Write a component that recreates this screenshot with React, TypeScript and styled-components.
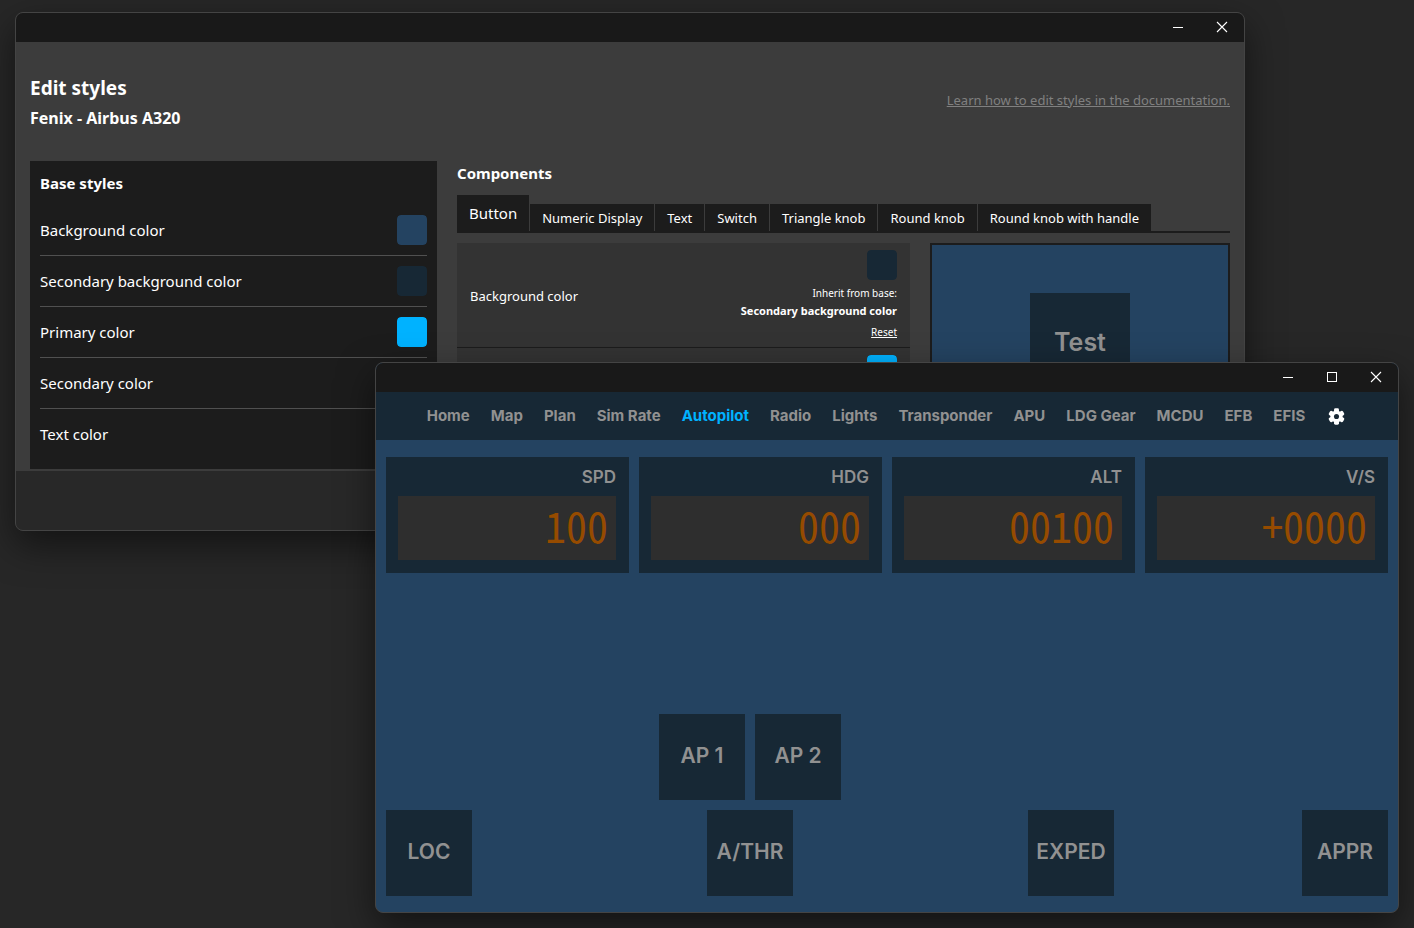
import React from "react";
import styled, { createGlobalStyle } from "styled-components";

const GlobalStyle = createGlobalStyle`
  *, *::before, *::after { box-sizing: border-box; }
  body {
    margin: 0;
    background: #272727;
    color: #fff;
    font-family: "Noto Sans", "Open Sans", sans-serif;
    font-size: 15px;
  }
  button, input { font: inherit; color: inherit; margin: 0; }
  button { cursor: pointer; }
  h1, h2, h3, ul { margin: 0; padding: 0; }
`;

const panelFont = `Inter, Roboto, sans-serif`;

const Desktop = styled.main`
  position: relative;
  min-height: 100vh;
  overflow: hidden;
`;

const Window = styled.section`
  position: absolute;
  border: 1px solid #444;
  border-radius: 8px;
  overflow: hidden;
  background: #3c3c3c;
  box-shadow: 0 14px 36px rgba(0, 0, 0, 0.5);
`;

const StylesWindow = styled(Window)`
  top: 12px;
  left: 15px;
  right: 169px;
`;

const PanelWindow = styled(Window)`
  top: 362px;
  left: 375px;
  right: 15px;
  background: #244361;
`;

const TitleBar = styled.div`
  display: flex;
  justify-content: flex-end;
  height: 29px;
  background: #191919;
`;

const WindowButton = styled.button`
  display: flex;
  align-items: center;
  justify-content: center;
  width: 44px;
  padding: 0 0 1px;
  border: 0;
  background: transparent;
`;

const EditorBody = styled.div`
  padding: 32px 14px 2px;
`;

const EditorHeader = styled.header`
  display: flex;
  justify-content: space-between;
  align-items: center;
  padding-bottom: 30px;
`;

const Title = styled.h1`
  font-size: 19px;
  line-height: 28px;
  font-weight: 700;
`;

const Subtitle = styled.h2`
  margin-top: 4px;
  font-size: 16px;
  line-height: 25px;
  font-weight: 700;
`;

const DocsLink = styled.a`
  padding-bottom: 6px;
  color: #808080;
  font-size: 13px;
  line-height: 20px;
`;

const Columns = styled.div`
  display: grid;
  grid-template-columns: 407px minmax(0, 1fr);
  gap: 20px;
`;

const BasePanel = styled.section`
  padding: 10px;
  background: #1c1c1c;
`;

const SectionTitle = styled.h3`
  font-size: 15px;
  line-height: 24px;
  font-weight: 700;
`;

const BaseList = styled.ul`
  margin-top: 10px;
  list-style: none;
`;

const BaseRow = styled.li`
  display: flex;
  align-items: center;
  justify-content: space-between;
  padding: 10px 0;
  & + & { border-top: 1px solid #505050; }
`;

const Swatch = styled.input.attrs({ type: "color" })`
  appearance: none;
  display: block;
  width: 30px;
  height: 30px;
  padding: 0;
  border: 0;
  border-radius: 4px;
  overflow: hidden;
  background: none;
  &::-webkit-color-swatch-wrapper { padding: 0; }
  &::-webkit-color-swatch { border: 0; border-radius: 4px; }
`;

const Tabs = styled.div`
  display: flex;
  align-items: flex-end;
  gap: 1px;
  margin-top: 10px;
  border-bottom: 2px solid #1c1c1c;
`;

const Tab = styled.button<{ $active?: boolean }>`
  height: ${(p) => (p.$active ? 36 : 27)}px;
  padding: 0 12px;
  border: 0;
  background: #1c1c1c;
  font-size: ${(p) => (p.$active ? 15 : 13)}px;
  white-space: nowrap;
`;

const ComponentArea = styled.div`
  display: grid;
  grid-template-columns: minmax(0, 1fr) 300px;
  gap: 20px;
  align-items: start;
  margin-top: 10px;
`;

const PropertyList = styled.div`
  background: #333;
`;

const PropertyRow = styled.div`
  display: flex;
  align-items: center;
  justify-content: space-between;
  padding: 7px 13px 6px;
  border-bottom: 1px solid #1c1c1c;
  font-size: 13px;
`;

const PropertyValue = styled.div`
  display: flex;
  flex-direction: column;
  align-items: flex-end;
  font-size: 10px;
  line-height: 17px;
  ${Swatch} { margin-bottom: 5px; }
`;

const InheritedName = styled.strong`
  font-size: 11px;
`;

const ResetButton = styled.button`
  margin-top: 5px;
  padding: 0;
  border: 0;
  background: none;
  text-decoration: underline;
`;

const Preview = styled.div`
  display: flex;
  align-items: center;
  justify-content: center;
  height: 200px;
  border: 2px solid #1c1c1c;
  background: #244361;
`;

const SquareButton = styled.button<{ $size: number; $fontSize: number }>`
  width: ${(p) => p.$size}px;
  height: ${(p) => p.$size}px;
  padding: 0 0 3px;
  border: 0;
  background: #172835;
  color: #919191;
  font-family: ${panelFont};
  font-size: ${(p) => p.$fontSize}px;
  font-weight: 600;
  white-space: nowrap;
`;

const EditorFooter = styled.footer`
  height: 59px;
  background: #282828;
`;

const Nav = styled.nav`
  display: flex;
  align-items: center;
  justify-content: center;
  gap: 21px;
  height: 48px;
  background: #172835;
  font-family: ${panelFont};
  font-size: 15px;
  font-weight: 700;
`;

const NavLink = styled.a<{ $active?: boolean }>`
  padding-bottom: 2px;
  color: ${(p) => (p.$active ? "#00b2ff" : "#919191")};
  text-decoration: none;
  white-space: nowrap;
`;

const SettingsButton = styled.button`
  display: flex;
  padding: 0 2px;
  border: 0;
  background: none;
`;

const Panel = styled.div`
  display: flex;
  flex-direction: column;
  gap: 10px;
  min-height: 472px;
  padding: 17px 10px 16px;
`;

const Displays = styled.div`
  display: grid;
  grid-template-columns: repeat(4, minmax(0, 1fr));
  gap: 10px;
  margin-bottom: auto;
`;

const DisplayCard = styled.div`
  padding: 10px 13px 13px 12px;
  background: #172835;
  color: #919191;
  font-family: ${panelFont};
  text-align: right;
`;

const DisplayLabel = styled.div`
  font-size: 17px;
  line-height: 20px;
  font-weight: 600;
`;

const Screen = styled.output`
  display: block;
  height: 64px;
  margin-top: 9px;
  padding-right: 8px;
  background: #2e2e2e;
  color: #964b00;
  font-family: "Noto Sans Mono CJK JP", "Noto Sans CJK JP", monospace;
  font-size: 42px;
  line-height: 58px;
`;

const ButtonRow = styled.div`
  display: grid;
  grid-template-columns: 86px 5fr 86px 5fr 86px 4fr 86px;
`;

const Slot = styled.div<{ $column: string }>`
  display: flex;
  justify-content: center;
  gap: 10px;
  grid-column: ${(p) => p.$column};
`;

const Minimize = () => (
  <WindowButton aria-label="Minimize">
    <svg width="10" height="10" viewBox="0 0 10 10" aria-hidden="true">
      <path d="M0 5.5H10" stroke="#fff" />
    </svg>
  </WindowButton>
);

const Maximize = () => (
  <WindowButton aria-label="Maximize">
    <svg width="10" height="10" viewBox="0 0 10 10" aria-hidden="true">
      <rect x="0.5" y="0.5" width="9" height="9" fill="none" stroke="#fff" />
    </svg>
  </WindowButton>
);

const Close = () => (
  <WindowButton aria-label="Close">
    <svg width="10" height="10" viewBox="0 0 10 10" overflow="visible" aria-hidden="true">
      <path d="M0 0L10 10M10 0L0 10" stroke="#fff" strokeWidth="1.1" />
    </svg>
  </WindowButton>
);

const Gear = () => (
  <svg width="17" height="17" viewBox="0 0 24 24" aria-hidden="true">
    <g fill="#fff">
      {[0, 60, 120].map((angle) => (
        <rect key={angle} x="8.5" y="0.5" width="7" height="23" rx="2" transform={`rotate(${angle} 12 12)`} />
      ))}
      <circle cx="12" cy="12" r="8.6" />
    </g>
    <circle cx="12" cy="12" r="3.6" fill="#172835" />
  </svg>
);

const baseStyles = [
  { id: "background", label: "Background color", color: "#244361" },
  { id: "background-secondary", label: "Secondary background color", color: "#172835" },
  { id: "primary", label: "Primary color", color: "#00b2ff" },
  { id: "secondary", label: "Secondary color", color: "#919191" },
  { id: "text", label: "Text color", color: "#ffffff" },
];

const componentTabs = [
  "Button",
  "Numeric Display",
  "Text",
  "Switch",
  "Triangle knob",
  "Round knob",
  "Round knob with handle",
];

const pages = [
  "Home", "Map", "Plan", "Sim Rate", "Autopilot", "Radio", "Lights",
  "Transponder", "APU", "LDG Gear", "MCDU", "EFB", "EFIS",
];

const displays = [
  { label: "SPD", value: "100" },
  { label: "HDG", value: "000" },
  { label: "ALT", value: "00100" },
  { label: "V/S", value: "+0000" },
];

const PanelButton = ({ children }: { children: React.ReactNode }) => (
  <SquareButton $size={86} $fontSize={21}>{children}</SquareButton>
);

export default function App() {
  return (
    <Desktop>
      <GlobalStyle />
      <StylesWindow>
        <TitleBar>
          <Minimize />
          <Close />
        </TitleBar>
        <EditorBody>
          <EditorHeader>
            <div>
              <Title>Edit styles</Title>
              <Subtitle>Fenix - Airbus A320</Subtitle>
            </div>
            <DocsLink href="#documentation">Learn how to edit styles in the documentation.</DocsLink>
          </EditorHeader>
          <Columns>
            <BasePanel>
              <SectionTitle>Base styles</SectionTitle>
              <BaseList>
                {baseStyles.map((s) => (
                  <BaseRow key={s.id}>
                    <label htmlFor={s.id}>{s.label}</label>
                    <Swatch id={s.id} defaultValue={s.color} />
                  </BaseRow>
                ))}
              </BaseList>
            </BasePanel>
            <section>
              <SectionTitle>Components</SectionTitle>
              <Tabs role="tablist">
                {componentTabs.map((name, i) => (
                  <Tab key={name} role="tab" aria-selected={i === 0} $active={i === 0}>{name}</Tab>
                ))}
              </Tabs>
              <ComponentArea>
                <PropertyList>
                  <PropertyRow>
                    <label htmlFor="button-background">Background color</label>
                    <PropertyValue>
                      <Swatch id="button-background" defaultValue="#172835" />
                      <span>Inherit from base:</span>
                      <InheritedName>Secondary background color</InheritedName>
                      <ResetButton>Reset</ResetButton>
                    </PropertyValue>
                  </PropertyRow>
                  <PropertyRow>
                    <span />
                    <PropertyValue>
                      <Swatch aria-label="Primary color" defaultValue="#00b2ff" />
                    </PropertyValue>
                  </PropertyRow>
                </PropertyList>
                <Preview>
                  <SquareButton $size={100} $fontSize={25}>Test</SquareButton>
                </Preview>
              </ComponentArea>
            </section>
          </Columns>
        </EditorBody>
        <EditorFooter />
      </StylesWindow>

      <PanelWindow>
        <TitleBar>
          <Minimize />
          <Maximize />
          <Close />
        </TitleBar>
        <Nav>
          {pages.map((page) => (
            <NavLink key={page} href={`#${page}`} $active={page === "Autopilot"}>{page}</NavLink>
          ))}
          <SettingsButton aria-label="Settings"><Gear /></SettingsButton>
        </Nav>
        <Panel>
          <Displays>
            {displays.map((d) => (
              <DisplayCard key={d.label}>
                <DisplayLabel>{d.label}</DisplayLabel>
                <Screen aria-label={d.label}>{d.value}</Screen>
              </DisplayCard>
            ))}
          </Displays>
          <ButtonRow>
            <Slot $column="2 / 5">
              <PanelButton>AP 1</PanelButton>
              <PanelButton>AP 2</PanelButton>
            </Slot>
          </ButtonRow>
          <ButtonRow>
            <Slot $column="1"><PanelButton>LOC</PanelButton></Slot>
            <Slot $column="3"><PanelButton>A/THR</PanelButton></Slot>
            <Slot $column="5"><PanelButton>EXPED</PanelButton></Slot>
            <Slot $column="7"><PanelButton>APPR</PanelButton></Slot>
          </ButtonRow>
        </Panel>
      </PanelWindow>
    </Desktop>
  );
}
